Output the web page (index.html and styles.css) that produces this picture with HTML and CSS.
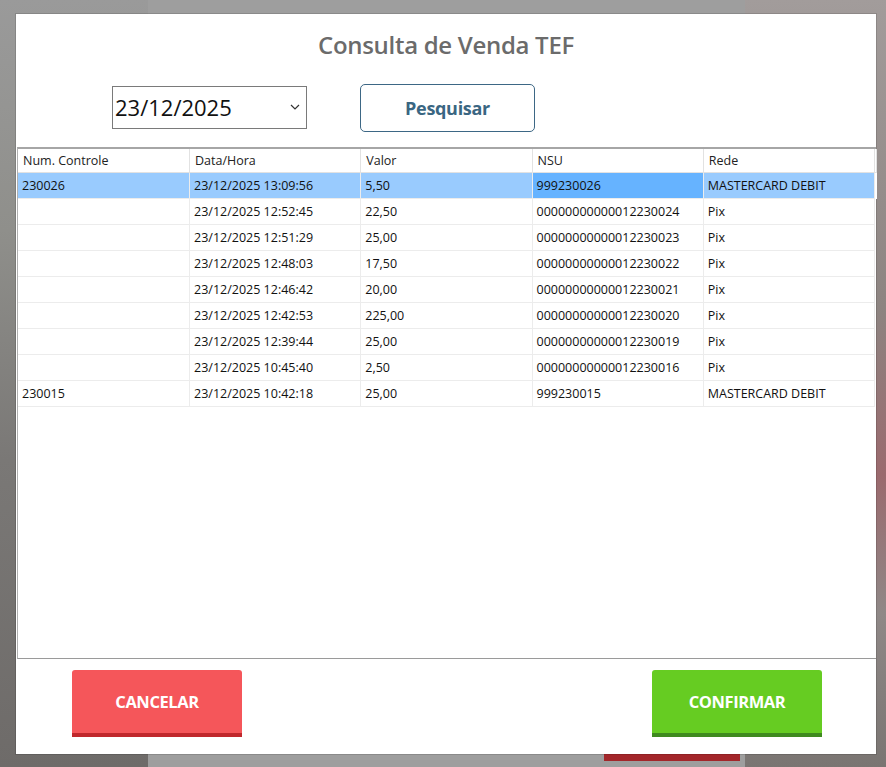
FILE: index.html
```html
<!DOCTYPE html>
<html lang="pt-BR">
<head>
    <meta charset="UTF-8">
    <meta name="viewport" content="width=device-width, initial-scale=1.0">
    <title>Consulta de Venda TEF</title>
    <link rel="stylesheet" href="styles.css">
</head>
<body>
    <!-- tela de fundo (desfocada atrás do modal) -->
    <div class="backdrop">
        <div class="bg-left"></div>
        <div class="bg-center">
            <div class="bg-red-bar"></div>
        </div>
        <div class="bg-right"></div>
    </div>

    <div class="modal">
        <h2 class="modal-title">Consulta de Venda TEF</h2>

        <div class="search-bar">
            <div class="date-select">
                <span>23/12/2025</span>
                <svg width="10" height="6" viewBox="0 0 10 6"><path d="M1 1 L5 5 L9 1" fill="none" stroke="#333" stroke-width="1.2"/></svg>
            </div>
            <button type="button" class="btn-search">Pesquisar</button>
        </div>

        <div class="grid">
            <table>
                <thead>
                    <tr>
                        <th>Num. Controle</th>
                        <th>Data/Hora</th>
                        <th>Valor</th>
                        <th>NSU</th>
                        <th>Rede</th>
                        <th class="filler"></th>
                    </tr>
                </thead>
                <tbody>
                    <tr class="selected">
                        <td>230026</td>
                        <td>23/12/2025 13:09:56</td>
                        <td>5,50</td>
                        <td class="current">999230026</td>
                        <td>MASTERCARD DEBIT</td>
                        <td class="filler"></td>
                    </tr>
                    <tr><td></td><td>23/12/2025 12:52:45</td><td>22,50</td><td>00000000000012230024</td><td>Pix</td><td class="filler"></td></tr>
                    <tr><td></td><td>23/12/2025 12:51:29</td><td>25,00</td><td>00000000000012230023</td><td>Pix</td><td class="filler"></td></tr>
                    <tr><td></td><td>23/12/2025 12:48:03</td><td>17,50</td><td>00000000000012230022</td><td>Pix</td><td class="filler"></td></tr>
                    <tr><td></td><td>23/12/2025 12:46:42</td><td>20,00</td><td>00000000000012230021</td><td>Pix</td><td class="filler"></td></tr>
                    <tr><td></td><td>23/12/2025 12:42:53</td><td>225,00</td><td>00000000000012230020</td><td>Pix</td><td class="filler"></td></tr>
                    <tr><td></td><td>23/12/2025 12:39:44</td><td>25,00</td><td>00000000000012230019</td><td>Pix</td><td class="filler"></td></tr>
                    <tr><td></td><td>23/12/2025 10:45:40</td><td>2,50</td><td>00000000000012230016</td><td>Pix</td><td class="filler"></td></tr>
                    <tr><td>230015</td><td>23/12/2025 10:42:18</td><td>25,00</td><td>999230015</td><td>MASTERCARD DEBIT</td><td class="filler"></td></tr>
                </tbody>
            </table>
        </div>

        <div class="actions">
            <button type="button" class="btn btn-cancel">CANCELAR</button>
            <button type="button" class="btn btn-confirm">CONFIRMAR</button>
        </div>
    </div>
</body>
</html>
```

FILE: styles.css
```css
body {
    margin: 0;
    width: 886px;
    height: 767px;
    overflow: hidden;
    position: relative;
    font-family: "Open Sans", "Noto Sans", sans-serif;
    background: #8e8e8e;
}

/* Fond flou */
.backdrop {
    display: flex;
    height: 100%;
}
.bg-left {
    width: 148px;
    background: linear-gradient(180deg, #9a9a9a 0%, #8f8f8b 30%, #7a7876 60%, #6e6b69 100%);
}
.bg-center {
    width: 597px;
    background: #9e9e9e;
    position: relative;
}
.bg-red-bar {
    position: absolute;
    left: 456px;
    bottom: 6px;
    width: 136px;
    height: 7px;
    background: #a3262a;
}
.bg-right {
    flex: 1;
    background: linear-gradient(180deg, #a29c9b 0%, #8d8481 40%, #9b6a6e 62%, #8f8887 80%, #7a7572 100%);
}

/* Modal */
.modal {
    position: absolute;
    top: 14px;
    left: 16px;
    width: 860px;
    height: 740px;
    background: #fff;
    box-shadow: 0 0 0 1px rgba(0, 0, 0, 0.12);
    display: flex;
    flex-direction: column;
}
.modal-title {
    margin: 15px 0 0;
    text-align: center;
    font-size: 24px;
    font-weight: 600;
    color: #6b6b6b;
    letter-spacing: -0.3px;
    height: 32px;
    line-height: 32px;
}

.search-bar {
    display: flex;
    align-items: center;
    gap: 53px;
    padding-left: 96px;
    margin-top: 23px;
    height: 48px;
}
.date-select {
    border: 1px solid #7a7a7a;
    display: flex;
    align-items: center;
    justify-content: space-between;
    padding: 0 6px 0 2px;
    box-sizing: border-box;
    width: 195px;
    height: 43px;
    font-size: 22px;
    color: #111;
    margin-top: -2px;
}
.btn-search {
    width: 175px;
    height: 48px;
    background: #fff;
    border: 1.5px solid #3d6785;
    border-radius: 5px;
    color: #3a6682;
    font-family: "Open Sans", "Noto Sans", sans-serif;
    font-size: 18px;
    font-weight: 700;
    letter-spacing: -0.3px;
    cursor: pointer;
}

/* Grille */
.grid {
    margin-top: 15px;
    margin-left: 1px;
    height: 512px;
    border-top: 2px solid #a6a6a6;
    border-left: 1px solid #b0b0b0;
    border-bottom: 1px solid #9a9a9a;
    box-sizing: border-box;
}
table {
    border-collapse: collapse;
    table-layout: fixed;
    width: 859px;
    font-size: 12.5px;
    color: #111;
}
th, td {
    height: 25px;
    padding: 0 4px;
    text-align: left;
    white-space: nowrap;
    overflow: hidden;
    border-right: 1px solid #ececec;
    border-bottom: 1px solid #ececec;
}
th {
    height: 23px;
    font-weight: 400;
    color: #222;
    padding-left: 5px;
    border-right: 1px solid #e2e2e2;
    border-bottom: 1px solid #e2e2e2;
}
th:nth-child(1), td:nth-child(1) { width: 162px; }
th.filler, td.filler {
    width: 1px;
    padding: 0;
}
td.filler {
    border: none;
}
tr.selected td {
    background: #99cbfe;
}
tr.selected td.current {
    background: #66b3ff;
}
tr.selected td.filler {
    background: #fff;
}

/* Boutons du bas */
.actions {
    display: flex;
    justify-content: space-between;
    padding: 11px 54px 0 56px;
}
.btn {
    width: 170px;
    height: 67px;
    border: none;
    border-radius: 3px 3px 0 0;
    color: #fff;
    font-family: "Open Sans", "Noto Sans", sans-serif;
    font-size: 16.5px;
    font-weight: 700;
    letter-spacing: -0.4px;
    cursor: pointer;
}
.btn-cancel {
    background: #f5565a;
    border-bottom: 4px solid #c0282c;
}
.btn-confirm {
    background: #66cc22;
    border-bottom: 4px solid #3f8a1f;
}
```
